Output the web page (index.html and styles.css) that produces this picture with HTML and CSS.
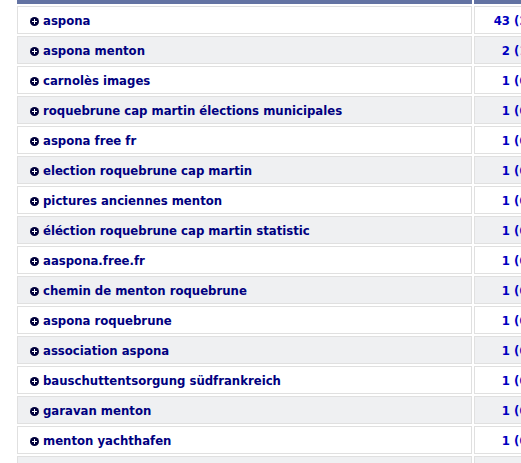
FILE: index.html
```html
<!DOCTYPE html>
<html>
<head>
<meta charset="utf-8">
<link rel="stylesheet" href="styles.css">
</head>
<body>
<table class="kw">
<thead>
<tr><th class="h1"></th><th class="h2"></th></tr>
</thead>
<tbody>
<tr><td class="lbl"><span class="ic"></span>aspona</td><td class="cnt"><span class="num">43</span> (25.3%)</td></tr>
<tr class="alt"><td class="lbl"><span class="ic"></span>aspona menton</td><td class="cnt"><span class="num">2</span> (1.2%)</td></tr>
<tr><td class="lbl"><span class="ic"></span>carnolès images</td><td class="cnt"><span class="num">1</span> (0.6%)</td></tr>
<tr class="alt"><td class="lbl"><span class="ic"></span>roquebrune cap martin élections municipales</td><td class="cnt"><span class="num">1</span> (0.6%)</td></tr>
<tr><td class="lbl"><span class="ic"></span>aspona free fr</td><td class="cnt"><span class="num">1</span> (0.6%)</td></tr>
<tr class="alt"><td class="lbl"><span class="ic"></span>election roquebrune cap martin</td><td class="cnt"><span class="num">1</span> (0.6%)</td></tr>
<tr><td class="lbl"><span class="ic"></span>pictures anciennes menton</td><td class="cnt"><span class="num">1</span> (0.6%)</td></tr>
<tr class="alt"><td class="lbl"><span class="ic"></span>éléction roquebrune cap martin statistic</td><td class="cnt"><span class="num">1</span> (0.6%)</td></tr>
<tr><td class="lbl"><span class="ic"></span>aaspona.free.fr</td><td class="cnt"><span class="num">1</span> (0.6%)</td></tr>
<tr class="alt"><td class="lbl"><span class="ic"></span>chemin de menton roquebrune</td><td class="cnt"><span class="num">1</span> (0.6%)</td></tr>
<tr><td class="lbl"><span class="ic"></span>aspona roquebrune</td><td class="cnt"><span class="num">1</span> (0.6%)</td></tr>
<tr class="alt"><td class="lbl"><span class="ic"></span>association aspona</td><td class="cnt"><span class="num">1</span> (0.6%)</td></tr>
<tr><td class="lbl"><span class="ic"></span>bauschuttentsorgung südfrankreich</td><td class="cnt"><span class="num">1</span> (0.6%)</td></tr>
<tr class="alt"><td class="lbl"><span class="ic"></span>garavan menton</td><td class="cnt"><span class="num">1</span> (0.6%)</td></tr>
<tr><td class="lbl"><span class="ic"></span>menton yachthafen</td><td class="cnt"><span class="num">1</span> (0.6%)</td></tr>
<tr class="alt"><td class="lbl"><span class="ic"></span>menton</td><td class="cnt"><span class="num">1</span> (0.6%)</td></tr>
</tbody>
</table>
</body>
</html>
```
FILE: styles.css
```css
html, body {
  margin: 0;
  padding: 0;
  background: #ffffff;
  overflow: hidden;
}
body {
  font-family: "DejaVu Sans Condensed", "DejaVu Sans", Verdana, sans-serif;
  font-size: 13px;
  font-weight: bold;
}
.kw {
  margin: -2px 0 0 15px;
  border-collapse: separate;
  border-spacing: 2px;
  width: 600px;
  table-layout: fixed;
}
.h1, .h2 {
  height: 4px;
  padding: 0;
  background: #6373a3;
}
.h1 { width: 455px; }
.kw td {
  height: 26px;
  padding: 1px 0 0 0;
  box-sizing: border-box;
  border: 1px solid #e0e0e0;
  background: #ffffff;
  white-space: nowrap;
  overflow: hidden;
}
.kw tbody td {
  height: 28px;
}
.kw tr.alt td {
  background: #eff0f2;
}
.lbl {
  padding-left: 12px !important;
  color: #000080;
}
.ic {
  display: inline-block;
  width: 9px;
  height: 9px;
  border-radius: 50%;
  background: #00003c;
  position: relative;
  vertical-align: -1px;
  margin-right: 4px;
}
.ic::before, .ic::after {
  content: "";
  position: absolute;
  background: #ffffff;
}
.ic::before {
  left: 2px;
  top: 4px;
  width: 5px;
  height: 1px;
}
.ic::after {
  left: 4px;
  top: 2px;
  width: 1px;
  height: 5px;
}
.cnt {
  color: #0000c0;
}
.num {
  display: inline-block;
  width: 35px;
  text-align: right;
}
```
